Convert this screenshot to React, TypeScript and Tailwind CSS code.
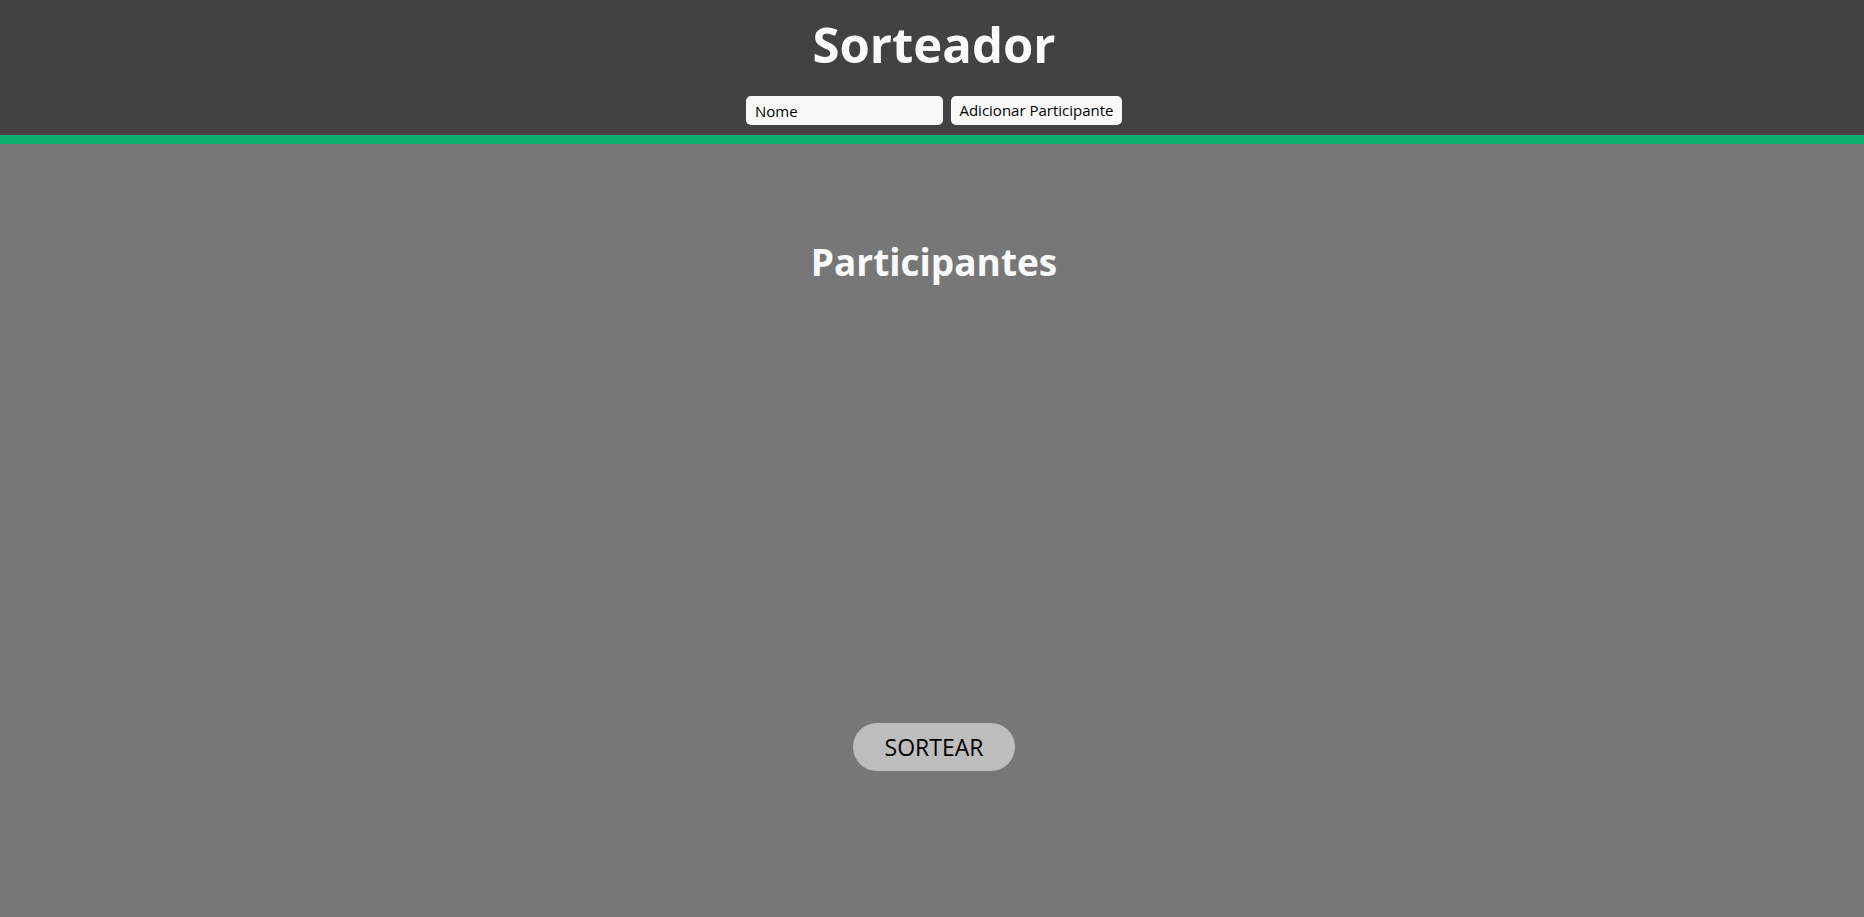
export default function App() {
  return (
    <div className="flex min-h-[917px] flex-col bg-[#777777] font-['Open_Sans',sans-serif]">
      <header className="flex h-[135px] flex-col items-center bg-[#424242] pl-[4px]">
        <h1 className="mt-[14px] h-[60px] text-[49px] font-bold leading-[60px] text-[#fafafa]">Sorteador</h1>
        <form className="mt-[22px] flex gap-[8px]" onSubmit={(e) => e.preventDefault()}>
          <input
            type="text"
            placeholder="Nome"
            className="h-[29px] w-[197px] rounded-[5px] bg-[#f9f9f9] px-[9px] text-[15px] text-black outline-none placeholder:text-black"
          />
          <button type="submit" className="h-[29px] w-[171px] rounded-[5px] bg-[#f9f9f9] text-[15px] text-black">
            Adicionar Participante
          </button>
        </form>
      </header>
      <div className="h-[9px] bg-[#0aae6e]" />
      <main className="flex flex-col items-center pl-[4px]">
        <h2 className="mt-[92px] h-[52px] text-[37px] font-bold leading-[52px] text-[#fafafa]">Participantes</h2>
        <ul className="h-[435px]" />
        <button className="h-[48px] w-[162px] rounded-full bg-[#bdbdbd] text-[23px] text-black">SORTEAR</button>
      </main>
    </div>
  );
}
